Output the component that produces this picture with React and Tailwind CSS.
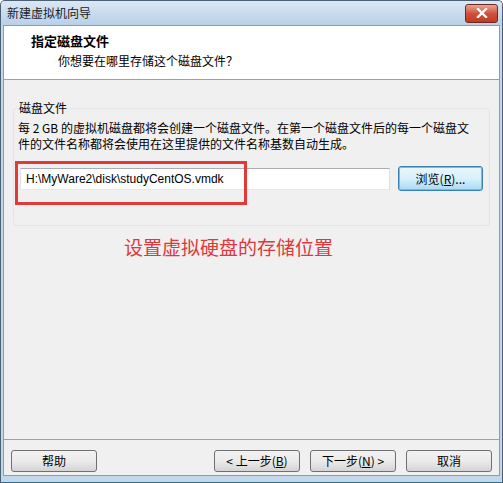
export default function App() {
  const btn = 'h-[22px] w-[86px] rounded-[3px] border border-[#707070] bg-gradient-to-b from-[#f2f2f2] via-[#ebebeb] to-[#d4d4d4] text-[12px] text-black flex items-center justify-center leading-none'

  return (
    <div className="w-[503px] h-[483px] bg-[#c3d6ea] border border-[#4b5f75] border-b-[#2f6f86] rounded-t-[5px] flex flex-col overflow-hidden font-['Noto_Sans_CJK_SC',sans-serif]">
      {/* TITLE BAR */}
      <div className="h-[24px] shrink-0 flex items-center justify-between pl-[6px] pr-[4px] bg-gradient-to-b from-[#dbe7f4] to-[#b9d0e8]">
        <span className="text-[12px] text-[#1a1a1a]">新建虚拟机向导</span>
        <div className="w-[33px] h-[19px] rounded-[3px] border border-[#6e2a22] bg-gradient-to-b from-[#e8a493] via-[#d0503a] to-[#c23a22] flex items-center justify-center">
          <svg width="12" height="10" viewBox="0 0 12 10"><path d="M2 1 L10 9 M10 1 L2 9" stroke="#fff" strokeWidth="2.4" strokeLinecap="square" /></svg>
        </div>
      </div>

      <div className="flex-1 flex flex-col mx-[2px] mb-[6px] border border-[#8a9cb0] bg-[#f0f0f0]">
        {/* HEADER */}
        <div className="h-[54px] shrink-0 bg-white border-b border-[#a0a0a0] pt-[5px] flex flex-col items-start">
          <p className="ml-[27px] text-[13px] font-bold text-black leading-[20px]">指定磁盘文件</p>
          <p className="ml-[54px] text-[12px] text-black leading-[20px]">你想要在哪里存储这个磁盘文件？</p>
        </div>

        {/* GROUP */}
        <div className="relative mt-[28px] mx-[9px] h-[118px] border border-[#e2e6ea] rounded-[3px]">
          <span className="absolute -top-[10px] left-[4px] px-[1px] bg-[#f0f0f0] text-[12px] text-black leading-[18px]">磁盘文件</span>
          <p className="mt-[11px] px-[4px] w-[470px] text-[12px] leading-[16px] text-black">
            每 2 GB 的虚拟机磁盘都将会创建一个磁盘文件。在第一个磁盘文件后的每一个磁盘文件的文件名称都将会使用在这里提供的文件名称基数自动生成。
          </p>
          <div className="mt-[14px] ml-[6px] flex items-center gap-[8px]">
            <div className="relative w-[370px] h-[22px] bg-white border border-t-[#abadb3] border-l-[#e2e3ea] border-r-[#dbdfe6] border-b-[#e3e9ef] flex items-center pl-[5px]">
              <span className="text-[12px] text-black font-['Liberation_Sans',sans-serif]">H:\MyWare2\disk\studyCentOS.vmdk</span>
              <div className="absolute -left-[6px] -top-[8px] w-[232px] h-[44px] border-[3px] border-[#e23a3a]" />
            </div>
            <div className="h-[25px] w-[85px] rounded-[3px] border border-[#3c7fb1] shadow-[inset_0_0_0_1px_#48d0f0] bg-gradient-to-b from-[#eaf6fd] via-[#d9f0fc] to-[#a7d9f5] text-[12px] text-black flex items-center justify-center">
              浏览(<span className="underline">R</span>)...
            </div>
          </div>
        </div>

        {/* NOTE */}
        <div className="mt-[8px] pl-[120px]">
          <p className="text-[19px] text-[#e0363c] leading-[26px]">设置虚拟硬盘的存储位置</p>
        </div>

        <div className="flex-1" />

        {/* FOOTER */}
        <div className="h-[36px] shrink-0 border-t border-[#a0a0a0] flex items-start pt-[10px] pl-[7px] pr-[7px]">
          <div className={btn}>帮助</div>
          <div className="flex-1" />
          <div className="flex gap-[10px]">
            <div className={btn}>&lt; 上一步(<span className="underline">B</span>)</div>
            <div className={btn}>下一步(<span className="underline">N</span>) &gt;</div>
            <div className={btn}>取消</div>
          </div>
        </div>
      </div>
    </div>
  )
}
